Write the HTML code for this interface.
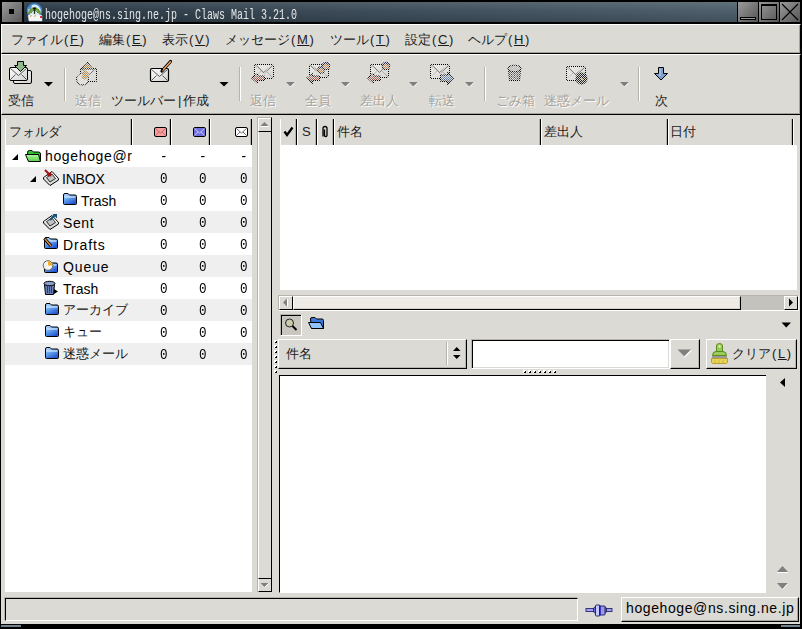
<!DOCTYPE html>
<html><head><meta charset="utf-8">
<style>
*{margin:0;padding:0;box-sizing:border-box}
html,body{width:802px;height:629px;overflow:hidden;background:#000}
body{position:relative;font-family:"Liberation Sans",sans-serif;color:#000}
.a{position:absolute}
.t{position:absolute;white-space:nowrap;line-height:1}
.bg{background:#dcdad5}
.jp{font-size:13px;color:#1a1a1a}
.dis{color:#a3a19c;text-shadow:1px 1px 0 #fff}
.mono{font-family:"Liberation Mono",monospace;font-size:14px;transform:scaleX(0.9);transform-origin:0 0}
.sep3{position:absolute;width:3px;border-left:1px solid #b8b4ad;border-right:1px solid #fff;background:#000}
</style></head><body>

<!-- title bar -->
<div class="a" style="left:2px;top:2px;width:20px;height:20px;background:linear-gradient(135deg,#9a9a9a,#585858)"></div>
<div class="a" style="left:9px;top:9px;width:5px;height:5px;background:#000"></div>
<div class="a" style="left:24px;top:2px;width:713px;height:20px;background:linear-gradient(rgba(255,255,255,0.10),rgba(255,255,255,0) 45%,rgba(0,0,0,0.16)),linear-gradient(to right,#2a3844,#3c4c58 45%,#4e606c)"></div>
<div class="a" style="left:738px;top:2px;width:20px;height:20px;background:linear-gradient(135deg,#9a9a9a,#555)"></div>
<div class="a" style="left:759px;top:2px;width:20px;height:20px;background:linear-gradient(135deg,#9a9a9a,#555)"></div>
<div class="a" style="left:780px;top:2px;width:20px;height:20px;background:linear-gradient(135deg,#9a9a9a,#555)"></div>
<div class="a" style="left:740px;top:17px;width:16px;height:3px;border:1px solid #000;background:#9a9a9a"></div>
<div class="a" style="left:761px;top:4px;width:16px;height:16px;border:1px solid #000;border-top-width:2px"></div>
<svg class="a" style="left:780px;top:2px" width="20" height="20"><path d="M2 2L18 18M18 2L2 18" stroke="#000" stroke-width="1.1"/></svg>
<!-- app icon -->
<svg class="a" style="left:26px;top:2px" width="18" height="20"><circle cx="8.5" cy="8.8" r="7" fill="#d8ecfa" stroke="#3c86d0" stroke-width="1.6"/><path d="M2.5 7A6.5 6.5 0 0 1 6 2.8L5 8Z" fill="#2a60b0" opacity="0.7"/><path d="M3 12Q4.5 6.5 8.5 6.5Q12.5 6.5 14 12" stroke="#6a9a28" stroke-width="2.2" fill="none"/><path d="M5 11Q6.5 8 8.5 8Q10.5 8 12 11" stroke="#3a6a10" stroke-width="1" fill="none"/><path d="M6.5 5.5H10.5L9.5 7.5H7.5Z" fill="#111"/><path d="M8.5 7V12" stroke="#203010" stroke-width="1.2"/><path d="M2 13.5Q5 12 8.5 13Q12 12 16 13.5V19H3Z" fill="#f4f4f4" stroke="#ddd" stroke-width="0.5"/><path d="M4 14.5L6 13.5M8 14.5L10 13.5" stroke="#c8a060" stroke-width="1"/><rect x="14" y="14" width="2" height="2" fill="#e03030"/></svg>
<div class="t" style="left:45px;top:7.6px;font-family:'Liberation Mono',monospace;font-size:14.5px;color:#e4e6e8;transform:scaleX(0.6897);transform-origin:0 0">hogehoge@ns.sing.ne.jp - Claws Mail 3.21.0</div>

<!-- window body -->
<div class="a bg" style="left:1px;top:24px;width:799px;height:600px"></div>

<!-- menubar -->
<div class="a" style="left:1px;top:24px;width:800px;height:30px;border-top:1px solid #fff;border-left:1px solid #fff;border-bottom:1px solid #000;border-right:1px solid #000;background:#dcdad5;box-shadow:inset -1px -1px 0 #a9a59d"></div>
<div class="t jp" style="left:11px;top:33px">ファイル<span style="letter-spacing:1.6px;margin-left:1px">(<u>F</u>)</span></div>
<div class="t jp" style="left:99px;top:33px">編集<span style="letter-spacing:1.6px;margin-left:1px">(<u>E</u>)</span></div>
<div class="t jp" style="left:162px;top:33px">表示<span style="letter-spacing:1.6px;margin-left:1px">(<u>V</u>)</span></div>
<div class="t jp" style="left:225px;top:33px">メッセージ<span style="letter-spacing:1.6px;margin-left:1px">(<u>M</u>)</span></div>
<div class="t jp" style="left:330px;top:33px">ツール<span style="letter-spacing:1.6px;margin-left:1px">(<u>T</u>)</span></div>
<div class="t jp" style="left:405px;top:33px">設定<span style="letter-spacing:1.6px;margin-left:1px">(<u>C</u>)</span></div>
<div class="t jp" style="left:468px;top:33px">ヘルプ<span style="letter-spacing:1.6px;margin-left:1px">(<u>H</u>)</span></div>

<!-- toolbar -->
<div class="a" style="left:1px;top:54px;width:800px;height:61px;border-top:1px solid #fff;border-left:1px solid #fff;border-bottom:1px solid #000;border-right:1px solid #000;background:#dcdad5;box-shadow:inset -1px -1px 0 #a9a59d"></div>


<!-- toolbar items -->
<svg class="a" style="left:0;top:55px" width="700" height="59">
<defs>
<pattern id="ck" width="2" height="2" patternUnits="userSpaceOnUse"><rect width="1" height="1" fill="#fff"/><rect x="1" y="1" width="1" height="1" fill="#fff"/></pattern>
<mask id="ckm" maskUnits="userSpaceOnUse" x="0" y="0" width="700" height="59"><rect width="700" height="59" fill="url(#ck)"/></mask>
<linearGradient id="envg" x1="0" y1="0" x2="1" y2="1"><stop offset="0" stop-color="#fff"/><stop offset="1" stop-color="#d0d0d0"/></linearGradient>
<linearGradient id="arrg" x1="0" y1="0" x2="0" y2="1"><stop offset="0" stop-color="#d8b0a8"/><stop offset="1" stop-color="#6a1a10"/></linearGradient>
<linearGradient id="arbg" x1="0" y1="0" x2="0" y2="1"><stop offset="0" stop-color="#a8c0d8"/><stop offset="1" stop-color="#2a4a6a"/></linearGradient>
</defs>
<!-- get mail -->
<rect x="13.5" y="15.5" width="18" height="13" rx="1.5" fill="url(#envg)" stroke="#000"/>
<rect x="9.5" y="12.5" width="18" height="13" rx="1.5" fill="url(#envg)" stroke="#000"/>
<path d="M10.5 13.5L18.5 20.5L26.5 13.5M10.5 24.5L15.5 19.5M26.5 24.5L21.5 19.5" stroke="#333" stroke-width="0.8" fill="none"/>
<path d="M17.5 6.5H23.5V10.5H26.5L20.5 16.5L14.5 10.5H17.5Z" fill="#8fb98a" stroke="#000"/>
<path d="M44 27H53L48.5 31.5Z" fill="#000"/>
<rect x="64" y="13" width="1" height="33" fill="#b8b4ad"/><rect x="65" y="13" width="1" height="33" fill="#fff"/>
<!-- compose -->
<rect x="150.5" y="13.5" width="18" height="13" rx="1.5" fill="url(#envg)" stroke="#000" stroke-width="1.2"/>
<path d="M151.5 14.5L159.5 21.5L167.5 14.5M151.5 25.5L156.5 20.5M167.5 25.5L162.5 20.5" stroke="#333" stroke-width="0.8" fill="none"/>
<path d="M162 16L170.5 6.5" stroke="#000" stroke-width="3.2" stroke-linecap="round"/>
<path d="M162.5 15.5L170.5 6.8" stroke="#e8a060" stroke-width="1.6" stroke-linecap="round"/>
<rect x="161" y="13.5" width="2" height="2" fill="#000"/>
<path d="M219.5 27H228.5L224 31.5Z" fill="#000"/>
<rect x="239" y="12" width="1" height="34" fill="#b8b4ad"/><rect x="240" y="12" width="1" height="34" fill="#fff"/>
<rect x="484" y="12" width="1" height="34" fill="#b8b4ad"/><rect x="485" y="12" width="1" height="34" fill="#fff"/>
<rect x="638" y="12" width="1" height="34" fill="#b8b4ad"/><rect x="639" y="12" width="1" height="34" fill="#fff"/>
<!-- next arrow -->
<path d="M658.5 12.5H663.5V18.5H667.5L661 25L654.5 18.5H658.5Z" fill="#7ea0d0" stroke="#000"/><path d="M660 13.5V21" stroke="#b8d0ee" stroke-width="1.2"/>
<path d="M286 27H295L290.5 31.5Z" fill="#7f7f7f"/><path d="M295 27.5L290.5 32" stroke="#fff" stroke-width="1"/><path d="M341 27H350L345.5 31.5Z" fill="#7f7f7f"/><path d="M350 27.5L345.5 32" stroke="#fff" stroke-width="1"/><path d="M409 27H418L413.5 31.5Z" fill="#7f7f7f"/><path d="M418 27.5L413.5 32" stroke="#fff" stroke-width="1"/><path d="M465 27H474L469.5 31.5Z" fill="#7f7f7f"/><path d="M474 27.5L469.5 32" stroke="#fff" stroke-width="1"/><path d="M620 27H629L624.5 31.5Z" fill="#7f7f7f"/><path d="M629 27.5L624.5 32" stroke="#fff" stroke-width="1"/><g mask="url(#ckm)"><path d="M80.5 13.5H96.5V26.5H80.5Z" fill="url(#envg)" stroke="#000"/><path d="M81 14L88 20L96 14" stroke="#777" stroke-width="1.4" fill="none"/><circle cx="82.5" cy="24" r="6" fill="#e8e8e8" stroke="#000"/><path d="M87 7L93 14H81Z" fill="#b08850" stroke="#000"/><path d="M85 15L81 23L86 25L89 18Z" fill="#c09040"/><rect x="254.5" y="9.5" width="19" height="14" rx="1.5" fill="url(#envg)" stroke="#000"/><path d="M255.5 10.5L264.0 17.68L272.5 10.5" stroke="#777" stroke-width="1.6" fill="none"/><path d="M255.5 22.5L261.22 16.0M272.5 22.5L265.78 16.0" stroke="#999" stroke-width="0.8" fill="none"/><path d="M251.5 23.0L257.5 18.5V21H264.5V25.5H257.5V28.5Z" fill="url(#arrg)" stroke="#000"/><rect x="309.5" y="9.5" width="19" height="13" rx="1.5" fill="url(#envg)" stroke="#000"/><path d="M310.5 10.5L319.0 17.060000000000002L327.5 10.5" stroke="#777" stroke-width="1.6" fill="none"/><path d="M310.5 21.5L316.22 15.5M327.5 21.5L320.78 15.5" stroke="#999" stroke-width="0.8" fill="none"/><circle cx="326" cy="11" r="3.8" fill="#c89060" stroke="#000"/><path d="M323.2 10Q326 6.2 328.8 10" stroke="#203070" stroke-width="1.4" fill="none"/><circle cx="321" cy="15" r="3.4" fill="#c89060" stroke="#000"/><path d="M318.6 14Q321 10.6 323.4 14" stroke="#203070" stroke-width="1.4" fill="none"/><path d="M306.5 23.0L312.5 18.5V21H319.5V25.5H312.5V28.5Z" fill="url(#arrg)" stroke="#000"/><rect x="370.5" y="9.5" width="18" height="13" rx="1.5" fill="url(#envg)" stroke="#000"/><path d="M371.5 10.5L379.5 17.060000000000002L387.5 10.5" stroke="#777" stroke-width="1.6" fill="none"/><path d="M371.5 21.5L376.84 15.5M387.5 21.5L381.16 15.5" stroke="#999" stroke-width="0.8" fill="none"/><circle cx="386" cy="11" r="3.8" fill="#c89060" stroke="#000"/><path d="M383.2 10Q386 6.2 388.8 10" stroke="#203070" stroke-width="1.4" fill="none"/><path d="M367.5 23.0L373.5 18.5V21H380.5V25.5H373.5V28.5Z" fill="url(#arrg)" stroke="#000"/><rect x="430.5" y="9.5" width="19" height="14" rx="1.5" fill="url(#envg)" stroke="#000"/><path d="M431.5 10.5L440.0 17.68L448.5 10.5" stroke="#777" stroke-width="1.6" fill="none"/><path d="M431.5 22.5L437.22 16.0M448.5 22.5L441.78 16.0" stroke="#999" stroke-width="0.8" fill="none"/><path d="M453.5 23.0L447.5 17.5V20H440.5V26.5H447.5V29.5Z" fill="url(#arbg)" stroke="#000"/><path d="M508.5 14.5H520.5L519.5 25.5H509.5Z" fill="#8a8a8a" stroke="#000"/><ellipse cx="514.5" cy="13.5" rx="6.5" ry="3.3" fill="#b8b8b8" stroke="#000"/><path d="M511.5 17V24M514.5 17V24M517.5 17V24" stroke="#555"/><rect x="566.5" y="11.5" width="19" height="14" rx="1.5" fill="url(#envg)" stroke="#000"/><path d="M567.5 12.5L576.0 19.68L584.5 12.5" stroke="#777" stroke-width="1.6" fill="none"/><path d="M567.5 24.5L573.22 18.0M584.5 24.5L577.78 18.0" stroke="#999" stroke-width="0.8" fill="none"/><circle cx="581.5" cy="23.5" r="5.5" fill="#222" stroke="#000"/><rect x="581" y="23" width="2" height="2" fill="#d8b020"/></g>
</svg>
<div class="t jp" style="left:8px;top:94px">受信</div>
<div class="t jp dis" style="left:75px;top:94px">送信</div>
<div class="t jp" style="left:111px;top:94px">ツールバー<span style="margin:0 2px 0 2px">|</span>作成</div>
<div class="t jp dis" style="left:250px;top:94px">返信</div>
<div class="t jp dis" style="left:305px;top:94px">全員</div>
<div class="t jp dis" style="left:360px;top:94px">差出人</div>
<div class="t jp dis" style="left:429px;top:94px">転送</div>
<div class="t jp dis" style="left:496px;top:94px">ごみ箱</div>
<div class="t jp dis" style="left:544px;top:94px">迷惑メール</div>
<div class="t jp" style="left:655px;top:94px">次</div>

<!-- folder pane -->
<div class="a" style="left:5px;top:115px;width:247px;height:30px;background:#dcdad5"></div>
<div class="a" style="left:5px;top:119px;width:1px;height:26px;background:#fff"></div>
<div class="sep3" style="left:130px;top:119px;height:26px"></div>
<div class="sep3" style="left:169px;top:119px;height:26px"></div>
<div class="sep3" style="left:208px;top:119px;height:26px"></div>
<div class="a" style="left:250px;top:119px;width:2px;height:26px;border-left:1px solid #b8b4ad;background:#000"></div>
<div class="t jp" style="left:9px;top:125px">フォルダ</div>
<svg class="a" style="left:150px;top:125px" width="100" height="14">
<defs>
<linearGradient id="fgb" x1="0" y1="0" x2="0.6" y2="1"><stop offset="0" stop-color="#c8e2ff"/><stop offset="0.45" stop-color="#6aaaf0"/><stop offset="1" stop-color="#2456d0"/></linearGradient>
<linearGradient id="fgg" x1="0" y1="0" x2="0" y2="1"><stop offset="0" stop-color="#b0f8a0"/><stop offset="1" stop-color="#58d048"/></linearGradient>
</defs>
<rect x="4.5" y="2.5" width="12" height="9" rx="1.5" fill="#f4a0a0" stroke="#000"/><path d="M5.5 3.5L10.5 8L15.5 3.5M5.5 10.5L9 7M15.5 10.5L12 7" stroke="#c55" stroke-width="0.8" fill="none"/>
<rect x="43.5" y="2.5" width="12" height="9" rx="1.5" fill="#7070e0" stroke="#000"/><path d="M44.5 3.5L49.5 8L54.5 3.5M44.5 10.5L48 7M54.5 10.5L51 7" stroke="#dde" stroke-width="0.8" fill="none"/>
<rect x="85.5" y="2.5" width="12" height="9" rx="1.5" fill="#fff" stroke="#000"/><path d="M86.5 3.5L91.5 8L96.5 3.5M86.5 10.5L90 7M96.5 10.5L93 7" stroke="#444" stroke-width="0.8" fill="none"/>
</svg>
<div class="a" style="left:5px;top:145px;width:247px;height:447px;background:#fff"></div>
<svg class="a" style="left:12px;top:154px" width="8" height="7"><path d="M6 0V6H0Z" fill="#000"/></svg>
<svg class="a" style="left:25px;top:149px" width="17" height="14"><path d="M2.5 3.5Q2.5 1.5 4.5 1.5H7L8.5 3H13.5Q15.5 3 15.5 5V11.5H3.5Z" fill="#30c030" stroke="#000"/><path d="M0.5 5.5H13.5L15.5 12.5H3.5Z" fill="url(#fgg)" stroke="#000"/></svg>
<div class="t" style="left:45px;top:149px;font-size:14px;letter-spacing:0.65px;color:#000">hogehoge@r</div>
<div class="t mono" style="left:160px;top:150px">-</div>
<div class="t mono" style="left:199px;top:150px">-</div>
<div class="t mono" style="left:240px;top:150px">-</div>
<div class="a" style="left:5px;top:167px;width:247px;height:22px;background:#efefef"></div>
<svg class="a" style="left:30px;top:176px" width="8" height="7"><path d="M6 0V6H0Z" fill="#000"/></svg>
<svg class="a" style="left:42px;top:169px" width="18" height="18"><path d="M1.5 8.5L10 2.5L16.5 9.5L8 15.5Z" fill="#fff" stroke="#000"/><path d="M1.5 8.5V10L8 16.5L16.5 11V9.5" fill="#ddd" stroke="#000"/><path d="M4.5 8.5L10 5L13.5 9.5L8 13Z" fill="#c4c4c4" stroke="#000" stroke-width="0.8"/><path d="M3 1L8 6" stroke="#a01010" stroke-width="2"/><path d="M5 7L9.5 7.5L9 3Z" fill="#a01010"/></svg>
<div class="t" style="left:62px;top:172px;font-size:14px;letter-spacing:-0.2px;color:#000">INBOX</div>
<div class="t mono" style="left:160px;top:172px">0</div>
<div class="t mono" style="left:199px;top:172px">0</div>
<div class="t mono" style="left:240px;top:172px">0</div>
<svg class="a" style="left:62px;top:192px" width="16" height="14"><path d="M1.5 3Q1.5 1.5 3 1.5H6L7.5 3H13Q14.5 3 14.5 4.5V11.5Q14.5 12.5 13.5 12.5H2.5Q1.5 12.5 1.5 11.5Z" fill="url(#fgb)" stroke="#000"/><path d="M2.5 5H13.5" stroke="#e8f4ff" stroke-width="1"/></svg>
<div class="t" style="left:81px;top:194px;font-size:14px;letter-spacing:0.0px;color:#000">Trash</div>
<div class="t mono" style="left:160px;top:194px">0</div>
<div class="t mono" style="left:199px;top:194px">0</div>
<div class="t mono" style="left:240px;top:194px">0</div>
<div class="a" style="left:5px;top:211px;width:247px;height:22px;background:#efefef"></div>
<svg class="a" style="left:42px;top:213px" width="18" height="18"><path d="M1.5 8.5L10 2.5L16.5 9.5L8 15.5Z" fill="#fff" stroke="#000"/><path d="M1.5 8.5V10L8 16.5L16.5 11V9.5" fill="#ddd" stroke="#000"/><path d="M4.5 8.5L10 5L13.5 9.5L8 13Z" fill="#c4c4c4" stroke="#000" stroke-width="0.8"/><path d="M8 7L13 2" stroke="#10507a" stroke-width="2"/><path d="M10.5 1H15V5.5Z" fill="#10507a"/></svg>
<div class="t" style="left:63px;top:216px;font-size:14px;letter-spacing:0.6px;color:#000">Sent</div>
<div class="t mono" style="left:160px;top:216px">0</div>
<div class="t mono" style="left:199px;top:216px">0</div>
<div class="t mono" style="left:240px;top:216px">0</div>
<svg class="a" style="left:43px;top:236px" width="16" height="14"><path d="M1.5 3Q1.5 1.5 3 1.5H6L7.5 3H13Q14.5 3 14.5 4.5V11.5Q14.5 12.5 13.5 12.5H2.5Q1.5 12.5 1.5 11.5Z" fill="url(#fgb)" stroke="#000"/><path d="M2.5 5H13.5" stroke="#e8f4ff" stroke-width="1"/></svg><svg class="a" style="left:42px;top:236px" width="16" height="16"><path d="M2.5 2.5L9 10" stroke="#000" stroke-width="3.2"/><path d="M2.8 2.8L9 10" stroke="#d89040" stroke-width="1.4"/></svg>
<div class="t" style="left:63px;top:238px;font-size:14px;letter-spacing:0.9px;color:#000">Drafts</div>
<div class="t mono" style="left:160px;top:238px">0</div>
<div class="t mono" style="left:199px;top:238px">0</div>
<div class="t mono" style="left:240px;top:238px">0</div>
<div class="a" style="left:5px;top:255px;width:247px;height:22px;background:#efefef"></div>
<svg class="a" style="left:43px;top:260px" width="16" height="14"><path d="M1.5 3Q1.5 1.5 3 1.5H6L7.5 3H13Q14.5 3 14.5 4.5V11.5Q14.5 12.5 13.5 12.5H2.5Q1.5 12.5 1.5 11.5Z" fill="url(#fgb)" stroke="#000"/><path d="M2.5 5H13.5" stroke="#e8f4ff" stroke-width="1"/></svg><svg class="a" style="left:42px;top:259px" width="16" height="16"><circle cx="6" cy="6.5" r="4.8" fill="#f4f4f4" stroke="#666" stroke-width="1"/><path d="M6 6.5V2.2A4.3 4.3 0 0 1 10.3 6.5Z" fill="#f0b020"/></svg>
<div class="t" style="left:63px;top:260px;font-size:14px;letter-spacing:0.9px;color:#000">Queue</div>
<div class="t mono" style="left:160px;top:260px">0</div>
<div class="t mono" style="left:199px;top:260px">0</div>
<div class="t mono" style="left:240px;top:260px">0</div>
<svg class="a" style="left:42px;top:279px" width="17" height="17"><path d="M2.5 5.5H12.5L11.5 15.5H3.5Z" fill="#6a80b8" stroke="#000"/><ellipse cx="7.5" cy="4.5" rx="5.5" ry="2.2" fill="#8aa0d0" stroke="#000"/><path d="M5.5 7V14M7.5 7V14M9.5 7V14" stroke="#334" stroke-width="0.9"/><path d="M12 10L16 12.5L12 15Z" fill="#000"/></svg>
<div class="t" style="left:63px;top:282px;font-size:14px;letter-spacing:0.0px;color:#000">Trash</div>
<div class="t mono" style="left:160px;top:282px">0</div>
<div class="t mono" style="left:199px;top:282px">0</div>
<div class="t mono" style="left:240px;top:282px">0</div>
<div class="a" style="left:5px;top:299px;width:247px;height:22px;background:#efefef"></div>
<svg class="a" style="left:44px;top:302px" width="16" height="14"><path d="M1.5 3Q1.5 1.5 3 1.5H6L7.5 3H13Q14.5 3 14.5 4.5V11.5Q14.5 12.5 13.5 12.5H2.5Q1.5 12.5 1.5 11.5Z" fill="url(#fgb)" stroke="#000"/><path d="M2.5 5H13.5" stroke="#e8f4ff" stroke-width="1"/></svg>
<div class="t jp" style="left:63px;top:303px;color:#111">アーカイブ</div>
<div class="t mono" style="left:160px;top:304px">0</div>
<div class="t mono" style="left:199px;top:304px">0</div>
<div class="t mono" style="left:240px;top:304px">0</div>
<svg class="a" style="left:44px;top:324px" width="16" height="14"><path d="M1.5 3Q1.5 1.5 3 1.5H6L7.5 3H13Q14.5 3 14.5 4.5V11.5Q14.5 12.5 13.5 12.5H2.5Q1.5 12.5 1.5 11.5Z" fill="url(#fgb)" stroke="#000"/><path d="M2.5 5H13.5" stroke="#e8f4ff" stroke-width="1"/></svg>
<div class="t jp" style="left:63px;top:325px;color:#111">キュー</div>
<div class="t mono" style="left:160px;top:326px">0</div>
<div class="t mono" style="left:199px;top:326px">0</div>
<div class="t mono" style="left:240px;top:326px">0</div>
<div class="a" style="left:5px;top:343px;width:247px;height:22px;background:#efefef"></div>
<svg class="a" style="left:44px;top:346px" width="16" height="14"><path d="M1.5 3Q1.5 1.5 3 1.5H6L7.5 3H13Q14.5 3 14.5 4.5V11.5Q14.5 12.5 13.5 12.5H2.5Q1.5 12.5 1.5 11.5Z" fill="url(#fgb)" stroke="#000"/><path d="M2.5 5H13.5" stroke="#e8f4ff" stroke-width="1"/></svg>
<div class="t jp" style="left:63px;top:347px;color:#111">迷惑メール</div>
<div class="t mono" style="left:160px;top:348px">0</div>
<div class="t mono" style="left:199px;top:348px">0</div>
<div class="t mono" style="left:240px;top:348px">0</div>

<!-- folder scrollbar -->
<div class="a" style="left:257px;top:117px;width:15px;height:475px;background:#dcdad5;border-top:1px solid #b8b4ad;border-left:1px solid #b8b4ad;border-right:1px solid #000"></div>
<div class="a" style="left:258px;top:118px;width:13px;height:14px;border-top:1px solid #fff;border-left:1px solid #fff;border-bottom:1px solid #000"></div>
<div class="a" style="left:258px;top:132px;width:1px;height:446px;background:#fff"></div>
<div class="a" style="left:258px;top:578px;width:13px;height:14px;border-top:1px solid #000;border-left:1px solid #fff;border-bottom:1px solid #000;background:#dcdad5"></div>
<svg class="a" style="left:258px;top:117px" width="13" height="475"><path d="M2.5 9H10.5L6.5 5Z" fill="#7f7f7f"/><path d="M2.5 9.5H10.5" stroke="#fff"/><path d="M2.5 466H10.5L6.5 470Z" fill="#7f7f7f"/><path d="M10.5 466.5L6.5 470.5" stroke="#fff"/></svg>

<!-- message list -->
<div class="a" style="left:280px;top:119px;width:1px;height:26px;background:#fff"></div>
<div class="sep3" style="left:295px;top:119px;height:26px"></div>
<div class="sep3" style="left:315px;top:119px;height:26px"></div>
<div class="sep3" style="left:332px;top:119px;height:26px"></div>
<div class="sep3" style="left:539px;top:119px;height:26px"></div>
<div class="sep3" style="left:666px;top:119px;height:26px"></div>
<div class="sep3" style="left:791px;top:119px;height:26px"></div>
<svg class="a" style="left:283px;top:126px" width="12" height="12"><path d="M1.5 5.5L4 9L9.5 1.5" stroke="#000" stroke-width="2.3" fill="none"/></svg>
<div class="t" style="left:302px;top:125px;font-size:13px;color:#222">S</div>
<svg class="a" style="left:320px;top:125px" width="10" height="13"><path d="M3 11.5V3.5Q3 1.5 5 1.5Q7 1.5 7 3.5V10.5Q7 11.5 5.5 11.5Q4.5 11.5 4.5 10.5V4.5" stroke="#000" stroke-width="1.3" fill="none"/></svg>
<div class="t jp" style="left:337px;top:125px">件名</div>
<div class="t jp" style="left:544px;top:125px">差出人</div>
<div class="t jp" style="left:670px;top:125px">日付</div>
<div class="a" style="left:280px;top:145px;width:517px;height:145px;background:#fff"></div>

<!-- h scrollbar -->
<div class="a" style="left:278px;top:295px;width:521px;height:16px;background:#c4c2bd;border-top:1px solid #b8b4ad;border-left:1px solid #b8b4ad;border-bottom:1px solid #fff;border-right:1px solid #fff"></div>
<div class="a" style="left:279px;top:296px;width:14px;height:14px;background:#dcdad5;border-top:1px solid #fff;border-left:1px solid #fff;border-right:1px solid #000;border-bottom:1px solid #000"></div>
<div class="a" style="left:293px;top:296px;width:448px;height:14px;background:#eeebe7;border-top:1px solid #fff;border-left:1px solid #fff;border-right:1px solid #000;border-bottom:1px solid #000;box-shadow:inset -1px -1px 0 #d8d2ca"></div>
<div class="a" style="left:784px;top:296px;width:14px;height:14px;background:#dcdad5;border-top:1px solid #fff;border-left:1px solid #fff;border-right:1px solid #000;border-bottom:1px solid #000"></div>
<svg class="a" style="left:278px;top:295px" width="520" height="15"><path d="M9 3.5V11.5L5 7.5Z" fill="#7f7f7f"/><path d="M9.5 4V11.5" stroke="#fff"/><path d="M511 3.5V11.5L515 7.5Z" fill="#000"/></svg>

<!-- search toolbar -->
<div class="a" style="left:280px;top:314px;width:22px;height:22px;background:#c9c6c0;border-top:1px solid #b8b4ad;border-left:1px solid #b8b4ad;border-bottom:1px solid #fff;border-right:1px solid #fff;box-shadow:inset 1px 1px 0 #000"></div>
<svg class="a" style="left:283px;top:316px" width="18" height="18"><circle cx="6.5" cy="7" r="4" fill="#c8caa8" stroke="#222" stroke-width="1"/><path d="M9.5 10L13.5 14" stroke="#000" stroke-width="2"/></svg>
<svg class="a" style="left:307px;top:315px" width="18" height="15"><path d="M3.5 4Q3.5 2.5 5 2.5H8L9.5 4H15Q16.5 4 16.5 5.5V13.5H4.5Z" fill="#3a78d8" stroke="#000"/><path d="M1.5 7.5H13.5L16.5 13.5H4.5Z" fill="#90c4f8" stroke="#000"/></svg>
<svg class="a" style="left:781px;top:322px" width="11" height="7"><path d="M0.5 0.5H10L5.25 5.5Z" fill="#000"/></svg>

<!-- quick search row -->
<svg class="a" style="left:274px;top:340px" width="4" height="40"><rect x="0" y="0" width="3" height="3" fill="#fff"/><path d="M2 1H3V3H1V2H2Z" fill="#000"/><rect x="0" y="5" width="3" height="3" fill="#fff"/><path d="M2 6H3V8H1V7H2Z" fill="#000"/><rect x="0" y="10" width="3" height="3" fill="#fff"/><path d="M2 11H3V13H1V12H2Z" fill="#000"/><rect x="0" y="15" width="3" height="3" fill="#fff"/><path d="M2 16H3V18H1V17H2Z" fill="#000"/><rect x="0" y="20" width="3" height="3" fill="#fff"/><path d="M2 21H3V23H1V22H2Z" fill="#000"/><rect x="0" y="25" width="3" height="3" fill="#fff"/><path d="M2 26H3V28H1V27H2Z" fill="#000"/><rect x="0" y="30" width="3" height="3" fill="#fff"/><path d="M2 31H3V33H1V32H2Z" fill="#000"/></svg>
<div class="a" style="left:278px;top:339px;width:189px;height:30px;background:#dcdad5;border-top:1px solid #fff;border-left:1px solid #fff;border-bottom:1px solid #000;border-right:1px solid #000;box-shadow:inset -1px -1px 0 #b8b4ad"></div>
<div class="a" style="left:446px;top:342px;width:2px;height:23px;border-left:1px solid #b8b4ad;border-right:1px solid #fff"></div>
<svg class="a" style="left:452px;top:346px" width="10" height="14"><path d="M1 5H8.5L4.75 1Z M1 9H8.5L4.75 13Z" fill="#000"/></svg>
<div class="t jp" style="left:286px;top:347px">件名</div>
<div class="a" style="left:471px;top:339px;width:199px;height:30px;background:#fff;border-top:1px solid #b8b4ad;border-left:1px solid #b8b4ad;border-bottom:1px solid #fff;border-right:1px solid #fff;box-shadow:inset 1px 1px 0 #000,inset -1px -1px 0 #dcdad5"></div>
<div class="a" style="left:670px;top:339px;width:30px;height:30px;background:#dcdad5;border-top:1px solid #fff;border-left:1px solid #fff;border-bottom:1px solid #000;border-right:1px solid #000;box-shadow:inset -1px -1px 0 #b8b4ad"></div>
<svg class="a" style="left:677px;top:349px" width="16" height="10"><path d="M0.5 0.5H14.5L7.5 7.5Z" fill="#7f7f7f"/><path d="M14.5 1L7.5 8" stroke="#fff" stroke-width="1.2"/></svg>
<div class="a" style="left:706px;top:339px;width:91px;height:30px;background:#dcdad5;border-top:1px solid #fff;border-left:1px solid #fff;border-bottom:1px solid #000;border-right:1px solid #000;box-shadow:inset -1px -1px 0 #b8b4ad"></div>
<svg class="a" style="left:710px;top:342px" width="20" height="23"><path d="M6.5 9.5V4Q6.5 1.5 9.5 1.5Q12.5 1.5 12.5 4V9.5" fill="#9ccc58" stroke="#5a8a20"/><circle cx="9.5" cy="4.5" r="1.2" fill="#dfeec0"/><path d="M2.5 13.5Q2.5 9.5 6 9.5H13Q16.5 9.5 16.5 13.5Z" fill="#9ccc58" stroke="#5a8a20"/><rect x="2" y="14" width="15" height="2" fill="#9a9a9a"/><path d="M1.5 16.5H17.5V20.5L16 21.5H3L1.5 20.5Z" fill="#e8d458" stroke="#b8a030"/><path d="M5 18V21M9 18V21M13 18V21" stroke="#c8b040" stroke-width="0.8"/></svg>
<div class="t jp" style="left:732px;top:347px">クリア<span style="letter-spacing:1.6px;margin-left:1px">(<u>L</u>)</span></div>
<svg class="a" style="left:522px;top:369px" width="38" height="5"><rect x="1" y="1" width="3" height="3" fill="#fff"/><path d="M3 2H4V4H2V3H3Z" fill="#000"/><rect x="6" y="1" width="3" height="3" fill="#fff"/><path d="M8 2H9V4H7V3H8Z" fill="#000"/><rect x="11" y="1" width="3" height="3" fill="#fff"/><path d="M13 2H14V4H12V3H13Z" fill="#000"/><rect x="16" y="1" width="3" height="3" fill="#fff"/><path d="M18 2H19V4H17V3H18Z" fill="#000"/><rect x="21" y="1" width="3" height="3" fill="#fff"/><path d="M23 2H24V4H22V3H23Z" fill="#000"/><rect x="26" y="1" width="3" height="3" fill="#fff"/><path d="M28 2H29V4H27V3H28Z" fill="#000"/><rect x="31" y="1" width="3" height="3" fill="#fff"/><path d="M33 2H34V4H32V3H33Z" fill="#000"/></svg>

<!-- message view -->
<div class="a" style="left:279px;top:375px;width:487px;height:218px;background:#fff;border-top:1px solid #000;border-left:1px solid #000;border-bottom:1px solid #fff"></div>
<svg class="a" style="left:776px;top:376px" width="14" height="216"><path d="M9 2V11L4 6.5Z" fill="#000"/><path d="M1 196H12L6.5 190Z" fill="#7f7f7f"/><path d="M1 196.5H12" stroke="#fff"/><path d="M1 207H12L6.5 213Z" fill="#7f7f7f"/><path d="M12 207.5L6.5 213.5" stroke="#fff"/></svg>

<!-- status bar -->
<div class="a" style="left:5px;top:598px;width:573px;height:23px;border-top:1px solid #000;border-left:1px solid #000;border-bottom:1px solid #fff;border-right:1px solid #fff;box-shadow:-1px -1px 0 #b8b4ad"></div>
<svg class="a" style="left:585px;top:604px" width="28" height="13"><rect x="1" y="4.5" width="26" height="3" fill="#a0a0ec" stroke="#282878" stroke-width="0.9"/><path d="M8.5 4L10.5 2.5V9.5L8.5 8Z M21.5 4L19.5 2.5V9.5L21.5 8Z" fill="#6a6ad0" stroke="#1a1a50" stroke-width="0.8"/><rect x="10.5" y="1" width="4.5" height="11" rx="1" fill="#c8c8fa" stroke="#1a1a60" stroke-width="0.9"/><rect x="15" y="2" width="5" height="9" rx="0.8" fill="#9a9ae8" stroke="#1a1a60" stroke-width="0.9"/><path d="M14.8 1.5V11.5" stroke="#0000e8" stroke-width="1.2"/></svg>
<div class="a" style="left:621px;top:597px;width:178px;height:25px;border-top:1px solid #fff;border-left:1px solid #fff;border-bottom:1px solid #000;border-right:1px solid #000;box-shadow:inset -1px -1px 0 #a9a59d"></div>
<div class="t" style="left:626px;top:601px;font-size:14px;letter-spacing:0.6px">hogehoge@ns.sing.ne.jp</div>

<div class="a" style="left:1px;top:625px;width:20px;height:2px;background:#6e8290"></div>
<div class="a" style="left:781px;top:625px;width:19px;height:2px;background:#6e8290"></div>
</body></html>
